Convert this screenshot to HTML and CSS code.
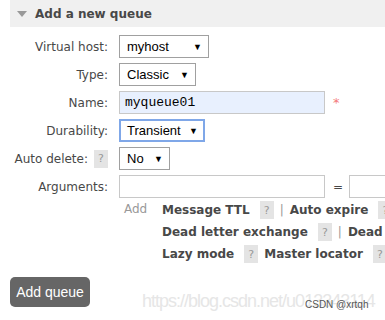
FILE: index.html
```html
<!DOCTYPE html>
<html lang="en">
<head>
    <meta charset="UTF-8">
    <title>Add a new queue</title>
    <link rel="stylesheet" href="styles.css">
</head>
<body>
    <div class="section">
        <h2 class="section-head"><span class="arrow"></span>Add a new queue</h2>
        <div class="queue-form">
            <div class="label">Virtual host:</div>
            <div class="field"><span class="select w-vhost">myhost<span class="caret">&#9660;</span></span></div>

            <div class="label">Type:</div>
            <div class="field"><span class="select w-type">Classic<span class="caret">&#9660;</span></span></div>

            <div class="label">Name:</div>
            <div class="field"><span class="input name">myqueue01</span><span class="required">*</span></div>

            <div class="label">Durability:</div>
            <div class="field"><span class="select w-dur focused">Transient<span class="caret">&#9660;</span></span></div>

            <div class="label">Auto delete: <span class="help">?</span></div>
            <div class="field"><span class="select w-del">No<span class="caret">&#9660;</span></span></div>

            <div class="label">Arguments:</div>
            <div class="field"><span class="input args"></span><span class="eq">=</span><span class="input args-val"></span></div>

            <div class="label"></div>
            <div class="field add-row">
                <span class="add">Add</span>
                <div class="arg-list">
                    <div class="arg-line"><b>Message TTL</b> <span class="help">?</span> <span class="sep">|</span> <b>Auto expire</b> <span class="help">?</span></div>
                    <div class="arg-line"><b>Dead letter exchange</b> <span class="help">?</span> <span class="sep">|</span> <b>Dead letter routing key</b></div>
                    <div class="arg-line"><b>Lazy mode</b> <span class="help">?</span> <b>Master locator</b> <span class="help">?</span></div>
                </div>
            </div>
        </div>
        <div class="footer">
            <button class="btn">Add queue</button>
            <span class="watermark">https://blog.csdn.net/u013343114</span>
            <span class="credit">CSDN @xrtqh</span>
        </div>
    </div>
</body>
</html>
```

FILE: styles.css
```css
* {
    margin: 0;
    padding: 0;
    box-sizing: border-box;
}
body {
    font-family: 'DejaVu Sans', Verdana, sans-serif;
    font-size: 11px;
    color: #484848;
    background: #fff;
    overflow: hidden;
    width: 385px;
    height: 320px;
}
.section {
    padding-left: 10px;
    position: relative;
}
.section-head {
    display: flex;
    align-items: center;
    height: 27px;
    background: #f0f0f0;
    font-size: 12px;
    font-weight: bold;
    color: #484848;
    padding-left: 7px;
    white-space: nowrap;
}
.arrow {
    width: 0;
    height: 0;
    border-left: 5px solid transparent;
    border-right: 5px solid transparent;
    border-top: 6px solid #999;
    margin-right: 8px;
}
.queue-form {
    display: grid;
    grid-template-columns: 98px auto;
    column-gap: 11px;
    row-gap: 5px;
    margin-top: 8px;
    white-space: nowrap;
}
.label {
    display: flex;
    align-items: center;
    justify-content: flex-end;
    height: 23px;
    font-size: 12px;
}
.label .help {
    margin-left: 6px;
}
.field {
    display: flex;
    align-items: center;
    height: 23px;
}
.select {
    display: flex;
    align-items: center;
    justify-content: space-between;
    height: 23px;
    border: 1px solid #a0a0a0;
    background: #fff;
    padding: 0 6px 0 7px;
    font-family: 'Liberation Sans', Arial, sans-serif;
    font-size: 13px;
    color: #000;
}
.caret {
    font-size: 9px;
    color: #000;
}
.w-vhost { width: 90px; }
.w-type { width: 77px; }
.w-dur { width: 86px; }
.w-del { width: 51px; }
.focused {
    border: 2px solid #7fa7e8;
    padding-left: 6px;
    padding-right: 5px;
}
.input {
    display: flex;
    align-items: center;
    height: 23px;
    border: 1px solid #c8c8c8;
    background: #fff;
}
.name {
    width: 206px;
    background: #e8f0fe;
    padding-left: 5px;
    font-family: 'Liberation Mono', 'Courier New', monospace;
    font-size: 13px;
    color: #000;
}
.required {
    color: #f47a7a;
    margin-left: 8px;
    font-size: 13px;
}
.args {
    width: 206px;
}
.eq {
    margin: 0 6px 0 8px;
    font-size: 12px;
}
.args-val {
    width: 60px;
}
.help {
    display: inline-flex;
    align-items: center;
    justify-content: center;
    width: 14px;
    height: 18px;
    background: #e4e4e4;
    color: #999;
    font-size: 11px;
    font-weight: normal;
}
.add-row {
    align-items: flex-start;
    height: auto;
    margin-top: -3px;
}
.add {
    color: #999;
    width: 43px;
    padding-left: 5px;
    padding-top: 2px;
    font-size: 12px;
}
.arg-list {
    display: flex;
    flex-direction: column;
    gap: 2px;
}
.arg-line {
    display: flex;
    align-items: center;
    gap: 6px;
    height: 20px;
    font-size: 12px;
}
.arg-line .help {
    margin-left: 4px;
}
.arg-line b {
    color: #484848;
}
.sep {
    color: #999;
}
.footer {
    position: relative;
    margin-top: 13px;
    height: 43px;
}
.btn {
    width: 80px;
    height: 30px;
    border: none;
    border-radius: 5px;
    background: #666;
    color: #fff;
    font-family: 'Liberation Sans', Arial, sans-serif;
    font-size: 14px;
}
.watermark {
    position: absolute;
    left: 132px;
    top: 14px;
    font-family: 'Liberation Sans', Arial, sans-serif;
    font-size: 18px;
    letter-spacing: -1px;
    color: #e6e6e6;
    white-space: nowrap;
}
.credit {
    position: absolute;
    left: 295px;
    top: 22px;
    font-family: 'Liberation Sans', Arial, sans-serif;
    font-size: 10px;
    color: #555;
    white-space: nowrap;
}
```
